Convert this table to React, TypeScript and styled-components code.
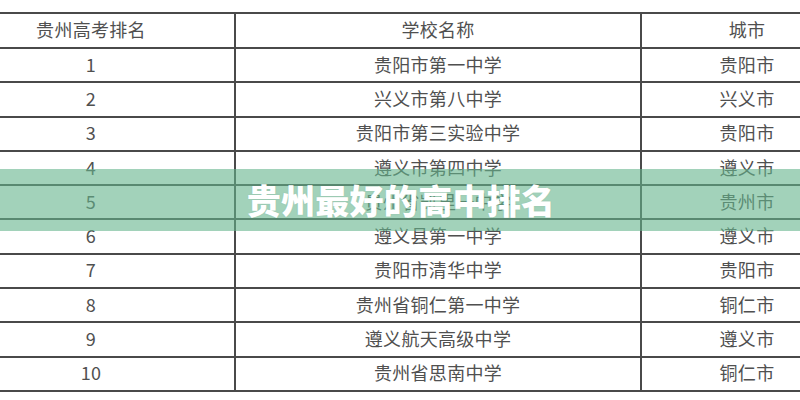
import React from "react";
import styled, { createGlobalStyle } from "styled-components";

const Global = createGlobalStyle`
  html, body { margin: 0; padding: 0; background: #fff; }
  body { width: 800px; height: 400px; overflow: hidden; }
  #root { width: 800px; height: 400px; }
`;

const Page = styled.div`
  position: relative;
  width: 800px;
  height: 400px;
  overflow: hidden;
  background: #fff;
  padding-top: 12px;
  box-sizing: border-box;
  font-family: "Noto Sans CJK SC", "Noto Sans", sans-serif;
`;

const Table = styled.div`
  margin-left: -52px;
  width: 904px;
  display: grid;
  grid-template-columns: 288px 406px 210px;
  border-top: 2px solid #4a4a4a;
`;

const Cell = styled.div<{ $h: number; $last?: boolean }>`
  height: ${(p) => p.$h}px;
  box-sizing: border-box;
  display: flex;
  align-items: center;
  justify-content: center;
  padding-bottom: 3px;
  line-height: 1;
  border-bottom: 2px solid #4a4a4a;
  border-right: ${(p) => (p.$last ? "none" : "2px solid #4a4a4a")};
  color: #505050;
  font-size: 18px;
  letter-spacing: 0.3px;
  white-space: nowrap;
`;

const Banner = styled.div`
  position: absolute;
  left: 0;
  right: 0;
  top: 169px;
  height: 62px;
  background: rgba(100, 180, 140, 0.6);
  display: flex;
  align-items: center;
  justify-content: center;
`;

const Title = styled.h1`
  margin: 0 0 0 2px;
  color: #fff;
  font-size: 34px;
  line-height: 1;
  font-weight: 900;
  letter-spacing: 0.3px;
  font-family: "Noto Sans CJK SC", "Noto Sans", sans-serif;
  text-shadow: 0 0 2px rgba(0, 0, 0, 0.08);
`;

const rows: [string, string, string][] = [
  ["1", "贵阳市第一中学", "贵阳市"],
  ["2", "兴义市第八中学", "兴义市"],
  ["3", "贵阳市第三实验中学", "贵阳市"],
  ["4", "遵义市第四中学", "遵义市"],
  ["5", "贵州省凯里一中学", "贵州市"],
  ["6", "遵义县第一中学", "遵义市"],
  ["7", "贵阳市清华中学", "贵阳市"],
  ["8", "贵州省铜仁第一中学", "铜仁市"],
  ["9", "遵义航天高级中学", "遵义市"],
  ["10", "贵州省思南中学", "铜仁市"],
];

export default function App() {
  return (
    <Page>
      <Global />
      <Table>
        <Cell $h={35}>贵州高考排名</Cell>
        <Cell $h={35}>学校名称</Cell>
        <Cell $h={35} $last>城市</Cell>
        {rows.map((r) => (
          <React.Fragment key={r[0]}>
            <Cell $h={34.3}>{r[0]}</Cell>
            <Cell $h={34.3}>{r[1]}</Cell>
            <Cell $h={34.3} $last>{r[2]}</Cell>
          </React.Fragment>
        ))}
      </Table>
      <Banner>
        <Title>贵州最好的高中排名</Title>
      </Banner>
    </Page>
  );
}
